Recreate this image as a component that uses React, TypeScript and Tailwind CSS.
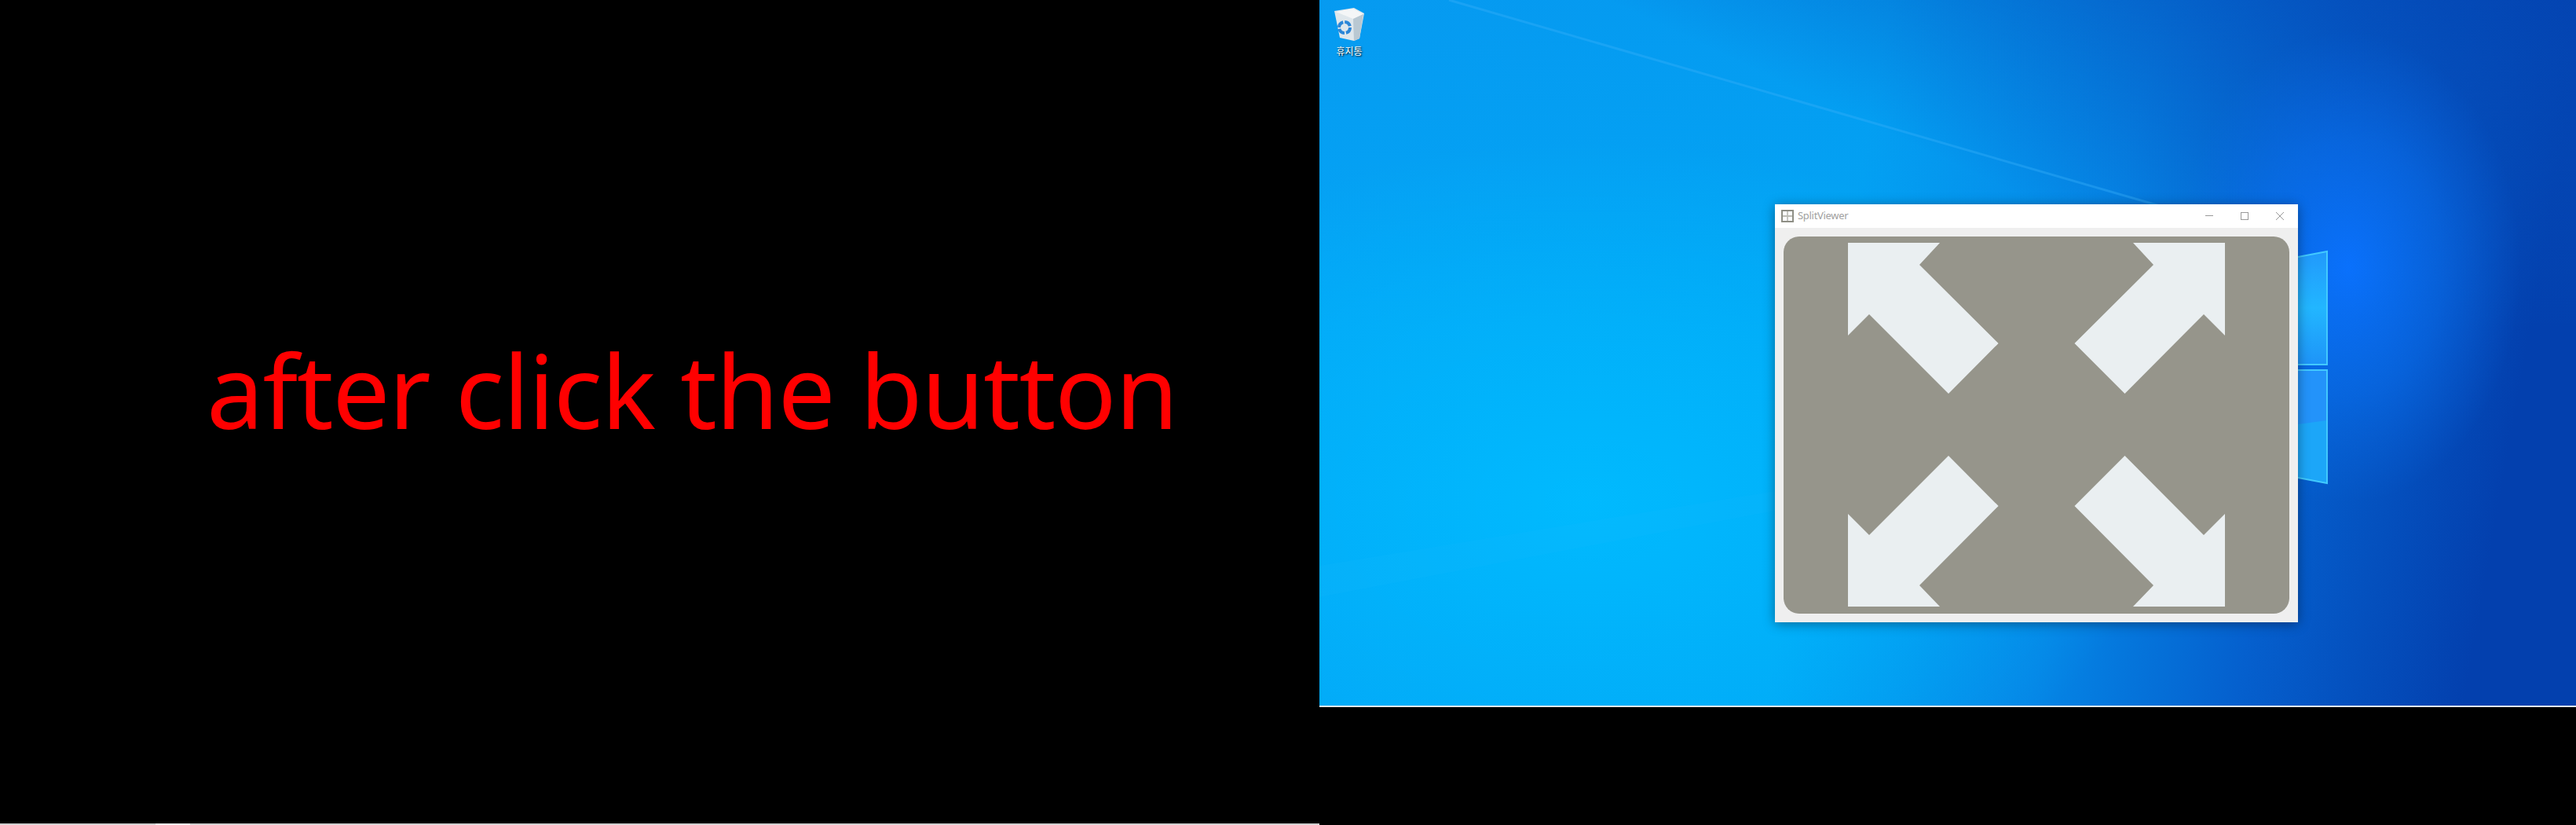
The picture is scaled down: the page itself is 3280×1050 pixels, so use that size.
const arrows = [
  "673,309 790,309 764,337 864.6,437 801,501 700,400 673,427",
  "1036,309 1153,309 1153,427 1126,400 1025.5,501 961.5,437 1062,337",
  "864.6,644 764,745 790,772 673,772 673,654 700,681 801,580",
  "961.5,644 1025.5,580 1126,681 1153,654 1153,772 1036,772 1062,745",
];

function Wallpaper() {
  return (
    <svg className="absolute inset-0" width="1600" height="900" viewBox="0 0 1600 900">
      <defs>
        <linearGradient id="base" x1="0" y1="0" x2="1" y2="0.1">
          <stop offset="0" stopColor="#04a6f6" />
          <stop offset="0.45" stopColor="#02a6f5" />
          <stop offset="0.66" stopColor="#0586e6" />
          <stop offset="0.82" stopColor="#0560ce" />
          <stop offset="1" stopColor="#0340ae" />
        </linearGradient>
        <linearGradient id="top" x1="0" y1="0" x2="0" y2="1">
          <stop offset="0" stopColor="#0a7fe4" stopOpacity="0.3" />
          <stop offset="1" stopColor="#0a7fe4" stopOpacity="0" />
        </linearGradient>
        <linearGradient id="corner" x1="1" y1="0" x2="0.68" y2="0.38">
          <stop offset="0" stopColor="#0340ae" stopOpacity="0.8" />
          <stop offset="1" stopColor="#0340ae" stopOpacity="0" />
        </linearGradient>
        <radialGradient id="bright" cx="0.5" cy="0.5" r="0.5">
          <stop offset="0" stopColor="#00bcff" stopOpacity="0.9" />
          <stop offset="1" stopColor="#00bcff" stopOpacity="0" />
        </radialGradient>
        <radialGradient id="glow" cx="0.5" cy="0.5" r="0.5">
          <stop offset="0" stopColor="#0a72ff" stopOpacity="0.95" />
          <stop offset="0.55" stopColor="#0a72f4" stopOpacity="0.5" />
          <stop offset="1" stopColor="#0a6ce8" stopOpacity="0" />
        </radialGradient>
        <linearGradient id="pane" x1="0" y1="0" x2="0" y2="1">
          <stop offset="0" stopColor="#2199fb" />
          <stop offset="0.5" stopColor="#22b6ff" />
          <stop offset="1" stopColor="#1e94f8" />
        </linearGradient>
      </defs>
      <rect width="1600" height="900" fill="url(#base)" />
      <rect width="1600" height="420" fill="url(#top)" />
      <rect width="1600" height="900" fill="url(#corner)" />
      <ellipse cx="340" cy="640" rx="720" ry="460" fill="url(#bright)" />
      <ellipse cx="1310" cy="340" rx="220" ry="300" fill="url(#glow)" />
      <line x1="165" y1="0" x2="1070" y2="262" stroke="#38b0fa" strokeWidth="3" opacity="0.4" />
      <polygon points="0,720 580,625 580,650 0,760" fill="#30c4ff" opacity="0.08" />
      <polygon points="1246,327 1283,320 1283,464 1246,464" fill="url(#pane)" />
      <polygon points="1246,471 1283,471 1283,615 1246,608" fill="#2393fa" />
      <polygon points="1246,540 1283,535 1283,615 1246,608" fill="#1ca6f8" />
      <path d="M1246 327L1283 320V464H1246" fill="none" stroke="#47d0ff" strokeWidth="2" opacity="0.9" />
      <path d="M1246 471H1283V615L1246 608" fill="none" stroke="#47d0ff" strokeWidth="2" opacity="0.9" />
    </svg>
  );
}

function RecycleBin() {
  return (
    <div className="absolute left-[8px] top-[8px] flex w-[60px] flex-col items-center">
      <svg width="40" height="44" viewBox="0 0 40 44">
        <polygon points="1,6 26,2 39,9 33,41 26,44 8,40" fill="#dfe7ec" />
        <polygon points="3,7 25,3 38,10 25,16" fill="#f4f6f7" />
        <polygon points="25,16 38,10 33,41 26,44" fill="#b9c8d2" />
        <circle cx="14" cy="27" r="7" fill="none" stroke="#2a86d8" strokeWidth="4" strokeDasharray="9 2" />
      </svg>
      <span className="mt-[6px] font-['Noto_Sans_CJK_KR',sans-serif] text-[12px] leading-[14px] text-white [text-shadow:1px_1px_2px_#000]">
        휴지통
      </span>
    </div>
  );
}

function AppWindow() {
  return (
    <div className="absolute left-[580px] top-[260px] flex h-[532px] w-[666px] flex-col bg-[#efefef] shadow-[0_2px_14px_rgba(0,0,0,0.4)]">
      <div className="flex h-[30px] items-center bg-white pl-[8px]">
        <svg width="16" height="16" viewBox="0 0 16 16">
          <rect width="16" height="16" fill="#8f8f85" />
          <rect x="2" y="2" width="5.5" height="5" fill="#fff" />
          <rect x="8.5" y="2" width="5.5" height="5" fill="#fff" />
          <rect x="2" y="9" width="5.5" height="5" fill="#fff" />
          <rect x="8.5" y="9" width="5.5" height="5" fill="#fff" />
          <rect x="2" y="7" width="12" height="2" fill="#bdbdb6" />
        </svg>
        <span className="ml-[5px] font-['Noto_Sans',sans-serif] text-[13px] tracking-[-0.3px] text-[#a0a0a0]">SplitViewer</span>
        <div className="ml-auto flex items-center gap-[35px] pr-[18px]">
          <svg width="10" height="10" viewBox="0 0 10 10" stroke="#999" fill="none">
            <path d="M0 4.5H10" />
          </svg>
          <svg width="10" height="10" viewBox="0 0 10 10" stroke="#999" fill="none">
            <rect x="0.5" y="0.5" width="9" height="9" />
          </svg>
          <svg width="10" height="10" viewBox="0 0 10 10" stroke="#999" fill="none">
            <path d="M0 0L10 10M10 0L0 10" />
          </svg>
        </div>
      </div>
      <div className="mx-[11px] mt-[11px] h-[480px] rounded-[20px] bg-[#96958b]" />
    </div>
  );
}

export default function App() {
  return (
    <div className="flex h-[1050px] w-[3280px] overflow-hidden bg-black">
      <div className="flex w-[1680px] flex-col">
        <div className="flex-1 pl-[263px] pt-[412px]">
          <p className="whitespace-nowrap font-['Noto_Sans',sans-serif] text-[130px] leading-[168px] tracking-[-1.45px] text-[#ff0000]">
            after click the button
          </p>
        </div>
        <div className="flex h-[2px] bg-[#d0d0d0]">
          <div className="ml-[198px] h-full w-[44px] bg-[#ececec]" />
        </div>
      </div>
      <div className="w-[1600px]">
        <div className="relative h-[900px] overflow-hidden border-b-2 border-[#dfe8ec]">
          <Wallpaper />
          <RecycleBin />
          <AppWindow />
          <svg className="absolute left-0 top-0" width="1600" height="900" viewBox="0 0 1600 900">
            {arrows.map((points) => (
              <polygon key={points} points={points} fill="#eaeff1" />
            ))}
          </svg>
        </div>
      </div>
    </div>
  );
}
